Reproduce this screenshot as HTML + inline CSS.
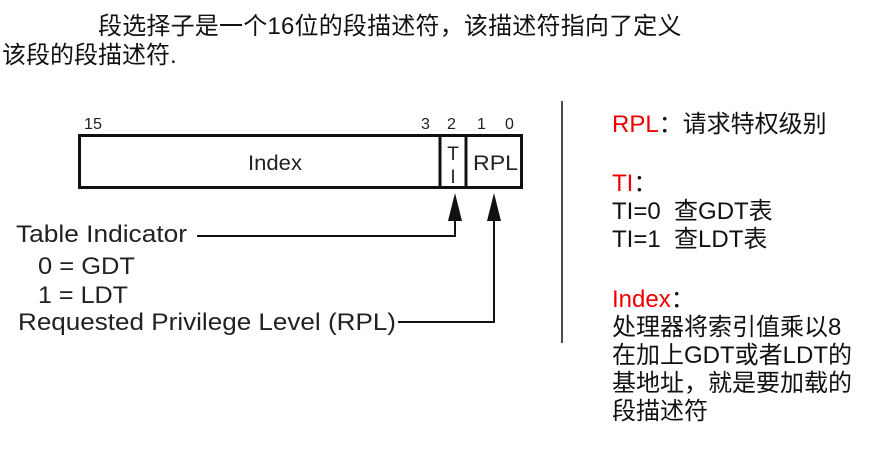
<!DOCTYPE html>
<html><head><meta charset="utf-8"><style>
body{margin:0;width:886px;height:450px;background:#fff;overflow:hidden;position:relative;font-family:"Liberation Sans","Noto Sans CJK SC",sans-serif;color:#111}
.t{position:absolute;white-space:nowrap;line-height:1}
.r{color:#e00}
</style></head><body>
<div class="t" style="left:98px;top:15px;font-size:24px;letter-spacing:0.2px">段选择子是一个16位的段描述符，该描述符指向了定义</div>
<div class="t" style="left:2px;top:44px;font-size:24px">该段的段描述符.</div>

<svg style="position:absolute;left:0;top:0" width="886" height="450">
<g font-family="Liberation Sans,sans-serif" fill="#222">
<text x="84" y="129" font-size="16" textLength="18" lengthAdjust="spacingAndGlyphs">15</text>
<text x="421" y="129" font-size="16">3</text>
<text x="447" y="129" font-size="16">2</text>
<text x="477" y="129" font-size="16">1</text>
<text x="505" y="129" font-size="16">0</text>
<text x="248" y="170" font-size="21" textLength="54" lengthAdjust="spacingAndGlyphs">Index</text>
<text x="453" y="160" font-size="19" text-anchor="middle">T</text>
<text x="453" y="183" font-size="19" text-anchor="middle">I</text>
<text x="473" y="170" font-size="21" textLength="45" lengthAdjust="spacingAndGlyphs">RPL</text>
<text x="16" y="242" font-size="24" textLength="171" lengthAdjust="spacingAndGlyphs">Table Indicator</text>
<text x="38" y="274" font-size="24" textLength="97" lengthAdjust="spacingAndGlyphs">0 = GDT</text>
<text x="38" y="303" font-size="24" textLength="90" lengthAdjust="spacingAndGlyphs">1 = LDT</text>
<text x="18" y="330" font-size="24" textLength="378" lengthAdjust="spacingAndGlyphs">Requested Privilege Level (RPL)</text>
</g>
<rect x="79.5" y="135.5" width="442" height="52" fill="none" stroke="#111" stroke-width="3"/>
<line x1="440" y1="135" x2="440" y2="188" stroke="#111" stroke-width="3"/>
<line x1="466" y1="135" x2="466" y2="188" stroke="#111" stroke-width="3"/>
<polyline points="197,236 455,236 455,210" fill="none" stroke="#111" stroke-width="2"/>
<polygon points="455,193 448,221 462,221" fill="#111"/>
<polyline points="398,322 494,322 494,210" fill="none" stroke="#111" stroke-width="2"/>
<polygon points="494,193 487,221 501,221" fill="#111"/>
<line x1="562" y1="101" x2="562" y2="343" stroke="#111" stroke-width="1.5"/>
</svg>

<div style="position:absolute;left:612px;top:111px;font-size:24px;line-height:28px">
<div><span class="r">RPL</span>：请求特权级别</div>
<div style="height:31px"></div>
<div><span class="r">TI</span>：</div>
<div>TI=0&nbsp; 查GDT表</div>
<div>TI=1&nbsp; 查LDT表</div>
<div style="height:32px"></div>
<div><span class="r">Index</span>：</div>
<div>处理器将索引值乘以8</div>
<div>在加上GDT或者LDT的</div>
<div>基地址，就是要加载的</div>
<div>段描述符</div>
</div>
</body></html>
